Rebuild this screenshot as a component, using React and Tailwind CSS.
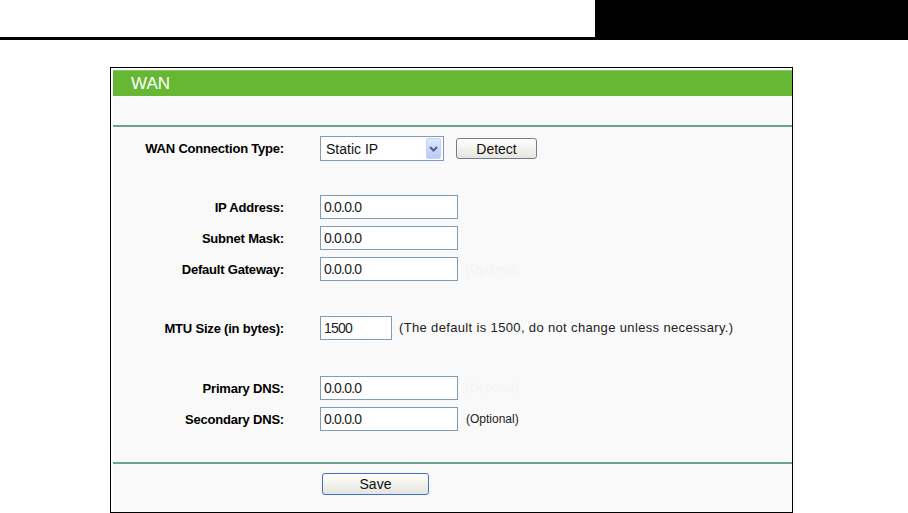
import React from "react";

function Label({ children }) {
  return (
    <div className="w-[171px] shrink-0 text-right text-[13px] font-bold text-black leading-none tracking-[-0.2px]">
      {children}
    </div>
  );
}

function TextBox({ value, w = "w-[138px]" }) {
  return (
    <div className={`${w} h-[24px] shrink-0 border border-[#7f9db9] bg-white flex items-center pl-[3px] text-[14px] text-[#222] tracking-[-0.8px] leading-none`}>
      {value}
    </div>
  );
}

function Row({ label, children, className = "" }) {
  return (
    <div className={`flex items-center ${className}`}>
      <Label>{label}</Label>
      <div className="ml-[36px] flex items-center">{children}</div>
    </div>
  );
}

export default function App() {
  return (
    <div className="w-[908px] h-[513px] bg-white font-['Liberation_Sans',Arial,sans-serif] overflow-hidden">
      <div className="flex h-[37px]">
        <div className="flex-1" />
        <div className="w-[313px] bg-black" />
      </div>
      <div className="h-[3px] bg-black" />
      <div className="ml-[110px] mt-[27px] w-[683px] h-[446px] border border-black bg-white pl-[2px] pt-[2px]">
        <div className="h-full bg-[#f9f9f9] flex flex-col">
          <div className="h-[26px] bg-[#66b834] border-t border-[#80c65a] flex items-center pl-[18px] text-[17px] text-white leading-none">
            WAN
          </div>
          <div className="h-[29px]" />
          <div className="h-[2px] bg-[#6aa688]" />

          <Row label="WAN Connection Type:" className="mt-[9px] h-[25px]">
            <div className="w-[124px] h-[25px] border border-[#7f9db9] bg-white flex items-center justify-between pl-[5px] pr-[2px]">
              <span className="text-[14px] text-[#111] leading-none">Static IP</span>
              <div className="w-[15px] h-[21px] rounded-[2px] bg-gradient-to-b from-[#dfe8fd] to-[#b7cbf7] border border-[#c3d3fd] flex items-center justify-center">
                <svg width="9" height="6" viewBox="0 0 9 6">
                  <path d="M1 1 L4.5 4.5 L8 1" stroke="#4d6185" strokeWidth="2" fill="none" />
                </svg>
              </div>
            </div>
            <div className="ml-[12px] w-[81px] h-[21px] rounded-[3px] border border-[#6f7e91] bg-gradient-to-b from-[#ffffff] to-[#e6e6dd] flex items-center justify-center text-[14px] text-[#111] leading-none">
              Detect
            </div>
          </Row>

          <Row label="IP Address:" className="mt-[34px] h-[24px]">
            <TextBox value="0.0.0.0" />
          </Row>
          <Row label="Subnet Mask:" className="mt-[7px] h-[24px]">
            <TextBox value="0.0.0.0" />
          </Row>
          <Row label="Default Gateway:" className="mt-[7px] h-[24px]">
            <TextBox value="0.0.0.0" />
            <span className="ml-[8px] text-[12px] text-[#f4f4f4]">(Optional)</span>
          </Row>

          <Row label="MTU Size (in bytes):" className="mt-[35px] h-[24px]">
            <TextBox value="1500" w="w-[72px]" />
            <span className="ml-[7px] text-[13px] text-[#222] tracking-[0.35px]">
              (The default is 1500, do not change unless necessary.)
            </span>
          </Row>

          <Row label="Primary DNS:" className="mt-[36px] h-[24px]">
            <TextBox value="0.0.0.0" />
            <span className="ml-[8px] text-[12px] text-[#f4f4f4]">(Optional)</span>
          </Row>
          <Row label="Secondary DNS:" className="mt-[7px] h-[24px]">
            <TextBox value="0.0.0.0" />
            <span className="ml-[8px] text-[12px] text-[#222]">(Optional)</span>
          </Row>

          <div className="mt-[31px] h-[2px] bg-[#6aa688]" />
          <div className="mt-[9px] flex">
            <div className="ml-[209px] w-[107px] h-[22px] rounded-[3px] border border-[#3d6fd1] bg-gradient-to-b from-[#ffffff] to-[#e4e4dc] flex items-center justify-center text-[14px] text-[#111] leading-none">
              Save
            </div>
          </div>
        </div>
      </div>
    </div>
  );
}
